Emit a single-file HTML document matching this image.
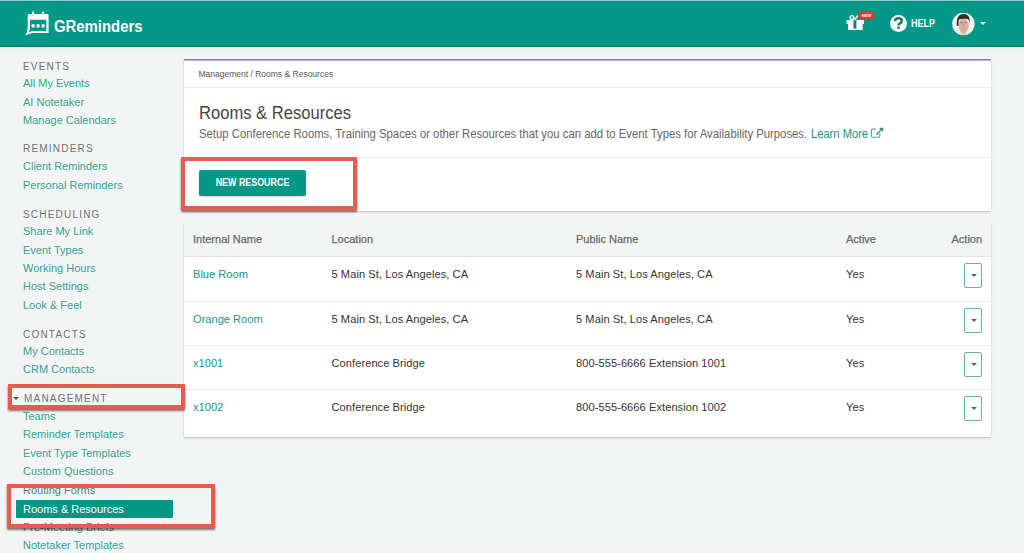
<!DOCTYPE html>
<html><head><meta charset="utf-8">
<style>
*{margin:0;padding:0;box-sizing:border-box}
html,body{width:1024px;height:553px;overflow:hidden;background:#f3f5f4;font-family:"Liberation Sans",sans-serif}
.a{position:absolute;white-space:nowrap;line-height:20px}
#hdr{position:absolute;left:0;top:0;width:1024px;height:47px;background:#039887;border-top:1px solid #86d6d0;border-bottom:2px solid #0b8476;box-shadow:inset 0 1px 0 #15877c,0 1px 2px rgba(0,0,0,.06)}
.sh{font-size:10px;color:#707070;letter-spacing:1.2px;left:23px;margin-top:1px}
.si{font-size:11px;color:#389f94;left:23px}
.card{position:absolute;background:#fff;box-shadow:0 1px 2px rgba(0,0,0,.22)}
.th{font-size:11px;color:#6a6a6a;font-weight:400;-webkit-text-stroke:0.25px #6a6a6a}
.td{font-size:11.1px;color:#333;letter-spacing:0.06px}
.tl{font-size:11.1px;color:#16968a}
.hr{position:absolute;height:1px;background:#ebebeb}
.act{position:absolute;width:18px;height:25px;border:1px solid #6aaba2;border-radius:2px;left:964px;background:#fff}
.act:after{content:"";position:absolute;left:5.5px;top:10px;border-left:3px solid transparent;border-right:3px solid transparent;border-top:3px solid #466e69}
.red{position:absolute;border:4px solid #e45d4f;box-shadow:0 1.5px 2px rgba(40,0,0,.55)}
</style></head><body>
<div id="hdr"></div>
<!-- logo -->
<svg style="position:absolute;left:0;top:0" width="60" height="47" viewBox="0 0 60 47">
  <path fill="#fff" fill-rule="evenodd" d="M28.9,14 H47.4 Q48.6,14 48.6,15.2 V33.1 H33.5 Q29.5,33.4 25.4,35.6 Q27.7,31 27.7,27 V15.2 Q27.7,14 28.9,14 Z M30.1,19.8 H46.3 V30.9 H33.3 Q30.6,31 28.7,32.2 Q30.1,30 30.1,27 Z"/>
  <rect x="31.9" y="11.3" width="2.4" height="4.8" rx="1.2" fill="#c8f0ea"/>
  <rect x="41.8" y="11.3" width="2.4" height="4.8" rx="1.2" fill="#c8f0ea"/>
  <circle cx="33.2" cy="25.9" r="1.8" fill="#fff"/>
  <circle cx="38.1" cy="25.9" r="1.8" fill="#fff"/>
  <circle cx="43.1" cy="25.9" r="1.8" fill="#fff"/>
</svg>
<div class="a" style="left:54px;top:16.5px;font-size:16px;font-weight:700;color:#fff;transform:scaleX(0.93);transform-origin:left">GReminders</div>

<!-- gift -->
<svg style="position:absolute;left:844px;top:10px" width="34" height="22" viewBox="0 0 34 22">
  <circle cx="8" cy="7.6" r="1.9" fill="none" stroke="#e8f8f5" stroke-width="1.5"/>
  <path d="M10.5 10 L14 5.5" stroke="#e8f8f5" stroke-width="1.4"/>
  <path d="M2.5 10 H19.9 V13.9 H18.7 V19.9 H4.1 V13.9 H2.5 Z" fill="#fff"/>
  <rect x="9.4" y="10.2" width="3" height="8.5" fill="#23806f"/>
  <rect x="14.2" y="1.5" width="16.3" height="8" rx="4" fill="#d93c32"/>
  <text x="22.4" y="7.4" font-family="Liberation Sans" font-size="4.3" font-weight="700" fill="#ffe9e6" text-anchor="middle">NEW</text>
</svg>
<!-- help -->
<div style="position:absolute;left:890px;top:14.5px;width:17px;height:17px;border-radius:50%;background:#fff"></div>
<svg style="position:absolute;left:885px;top:10px" width="26" height="26" viewBox="885 10 26 26">
  <path d="M895.1 21.2 Q895 18.2 898.5 18.2 Q901.8 18.2 901.8 20.8 Q901.8 22.4 900 23.3 Q898.5 24.1 898.5 25.6" fill="none" stroke="#1d756c" stroke-width="2.5" stroke-linecap="butt"/>
  <rect x="897.2" y="26.6" width="2.6" height="2.2" fill="#1d756c"/>
</svg>
<div class="a" style="left:910.5px;top:14px;font-size:10px;font-weight:700;color:#fff;transform:scaleX(0.9);transform-origin:left">HELP</div>
<!-- avatar -->
<svg style="position:absolute;left:951px;top:12px" width="24" height="24" viewBox="0 0 24 24">
  <circle cx="12.4" cy="12" r="11.2" fill="#f1f6f5"/>
  <path d="M8.5 18 Q9.5 23 12.5 23 Q15.5 23 16.5 18 Z" fill="#e6c6b8"/>
  <ellipse cx="12.6" cy="13.6" rx="5.1" ry="7.2" fill="#d9b1a0"/>
  <path d="M5.8 14 Q4.8 2 12.6 1.9 Q19.6 2 18.8 11 Q18 7.5 16.8 7 Q12.6 6.2 8.3 7.3 Q7.4 9 7.4 14 Z" fill="#3d2b27"/>
  <path d="M9.6 10.6 H11.3 M13.8 10.6 H15.5" stroke="#6b4a40" stroke-width="0.9"/>
  <path d="M12.6 11.5 V14.5 M11 16.8 H14.2" stroke="#b88a78" stroke-width="0.8"/>
</svg>
<div style="position:absolute;left:980px;top:22px;border-left:3px solid transparent;border-right:3px solid transparent;border-top:3px solid #e6f4f2"></div>

<!-- sidebar -->
<div class="a sh" style="top:56px">EVENTS</div>
<div class="a si" style="top:73px">All My Events</div>
<div class="a si" style="top:91.8px">AI Notetaker</div>
<div class="a si" style="top:110.3px">Manage Calendars</div>
<div class="a sh" style="top:138.2px">REMINDERS</div>
<div class="a si" style="top:156px">Client Reminders</div>
<div class="a si" style="top:175px">Personal Reminders</div>
<div class="a sh" style="top:203.5px">SCHEDULING</div>
<div class="a si" style="top:220.7px">Share My Link</div>
<div class="a si" style="top:239.6px">Event Types</div>
<div class="a si" style="top:258.1px">Working Hours</div>
<div class="a si" style="top:276.4px">Host Settings</div>
<div class="a si" style="top:294.6px">Look &amp; Feel</div>
<div class="a sh" style="top:323.6px">CONTACTS</div>
<div class="a si" style="top:341.3px">My Contacts</div>
<div class="a si" style="top:359.2px">CRM Contacts</div>
<div style="position:absolute;left:13px;top:396.5px;border-left:3px solid transparent;border-right:3px solid transparent;border-top:3.5px solid #555"></div>
<div class="a sh" style="top:388.2px;left:24px">MANAGEMENT</div>
<div class="a si" style="top:405.5px">Teams</div>
<div class="a si" style="top:424.4px">Reminder Templates</div>
<div class="a si" style="top:442.6px">Event Type Templates</div>
<div class="a si" style="top:460.5px">Custom Questions</div>
<div class="a si" style="top:480px;color:#4a837d">Routing Forms</div>
<div style="position:absolute;left:16px;top:500px;width:157px;height:18px;background:#049685;border-radius:1px"></div>
<div class="a si" style="top:498.5px;color:#fff">Rooms &amp; Resources</div>
<div class="a si" style="top:516.5px;color:#4a837d">Pre-Meeting Briefs</div>
<div class="a si" style="top:535px">Notetaker Templates</div>

<!-- card 1 -->
<div class="card" style="left:184px;top:59px;width:807px;height:152px;border-top:1px solid #887db5;box-shadow:inset 0 1px 0 #b9b2d6,0 1px 2px rgba(0,0,0,.22)"></div>
<div class="hr" style="left:184px;top:87px;width:807px"></div>
<div class="hr" style="left:184px;top:156.5px;width:807px"></div>
<div class="a" style="left:198.5px;top:64px;font-size:8.5px;color:#555">Management / Rooms &amp; Resources</div>
<div class="a" style="left:198.5px;top:103px;font-size:18px;color:#454545;transform:scaleX(0.921);transform-origin:left">Rooms &amp; Resources</div>
<div class="a" style="left:198.5px;top:124px;font-size:12px;color:#666;transform:scaleX(0.9435);transform-origin:left">Setup Conference Rooms, Training Spaces or other Resources that you can add to Event Types for Availability Purposes.</div>
<div class="a" style="left:811px;top:124px;font-size:12px;color:#17907f;transform:scaleX(0.93);transform-origin:left">Learn More</div>
<svg style="position:absolute;left:870px;top:126px" width="14" height="13" viewBox="0 0 14 13">
  <path d="M5.8 3.1 H2.8 Q1.4 3.1 1.4 4.5 V9.9 Q1.4 11.3 2.8 11.3 H8.4 Q9.8 11.3 9.8 9.9 V7.6" fill="none" stroke="#5f9f98" stroke-width="1.1"/>
  <path d="M9.2 1.8 H13.2 V5.8 Z" fill="#17887a"/>
  <path d="M12.2 2.8 L6.3 8.7" stroke="#2b8a80" stroke-width="1.3"/>
</svg>
<div style="position:absolute;left:199px;top:169.5px;width:107px;height:26px;background:#069886;border-radius:2px;box-shadow:0 1px 2px rgba(0,0,0,.2)"></div>
<div class="a" style="left:199px;top:172.5px;width:107px;text-align:center;font-size:10px;font-weight:700;color:#fff;transform:scaleX(0.89);transform-origin:center">NEW RESOURCE</div>

<!-- table card -->
<div class="card" style="left:184px;top:223px;width:807px;height:214px"></div>
<div style="position:absolute;left:184px;top:223px;width:807px;height:33px;background:#f3f4f4"></div>
<div class="hr" style="left:184px;top:256px;width:807px;background:#e4e4e4"></div>
<div class="hr" style="left:184px;top:300.5px;width:807px"></div>
<div class="hr" style="left:184px;top:344.5px;width:807px"></div>
<div class="hr" style="left:184px;top:388.5px;width:807px"></div>

<div class="a th" style="left:193px;top:229px">Internal Name</div>
<div class="a th" style="left:331.5px;top:229px">Location</div>
<div class="a th" style="left:576px;top:229px">Public Name</div>
<div class="a th" style="left:846px;top:229px">Active</div>
<div class="a th" style="left:951.5px;top:229px">Action</div>

<div class="a tl" style="left:193px;top:264px">Blue Room</div>
<div class="a td" style="left:331.5px;top:264px">5 Main St, Los Angeles, CA</div>
<div class="a td" style="left:576px;top:264px">5 Main St, Los Angeles, CA</div>
<div class="a td" style="left:846px;top:264px">Yes</div>
<div class="act" style="top:263px"></div>

<div class="a tl" style="left:193px;top:308.5px">Orange Room</div>
<div class="a td" style="left:331.5px;top:308.5px">5 Main St, Los Angeles, CA</div>
<div class="a td" style="left:576px;top:308.5px">5 Main St, Los Angeles, CA</div>
<div class="a td" style="left:846px;top:308.5px">Yes</div>
<div class="act" style="top:307.5px"></div>

<div class="a tl" style="left:193px;top:352.5px">x1001</div>
<div class="a td" style="left:331.5px;top:352.5px">Conference Bridge</div>
<div class="a td" style="left:576px;top:352.5px">800-555-6666 Extension 1001</div>
<div class="a td" style="left:846px;top:352.5px">Yes</div>
<div class="act" style="top:351.5px"></div>

<div class="a tl" style="left:193px;top:396.8px">x1002</div>
<div class="a td" style="left:331.5px;top:396.8px">Conference Bridge</div>
<div class="a td" style="left:576px;top:396.8px">800-555-6666 Extension 1002</div>
<div class="a td" style="left:846px;top:396.8px">Yes</div>
<div class="act" style="top:396px"></div>

<!-- red annotation boxes -->
<div class="red" style="left:181px;top:157px;width:175.5px;height:52.5px"></div>
<div class="red" style="left:8px;top:384px;width:177px;height:24.5px"></div>
<div class="red" style="left:7px;top:484px;width:207.5px;height:44px"></div>
</body></html>
